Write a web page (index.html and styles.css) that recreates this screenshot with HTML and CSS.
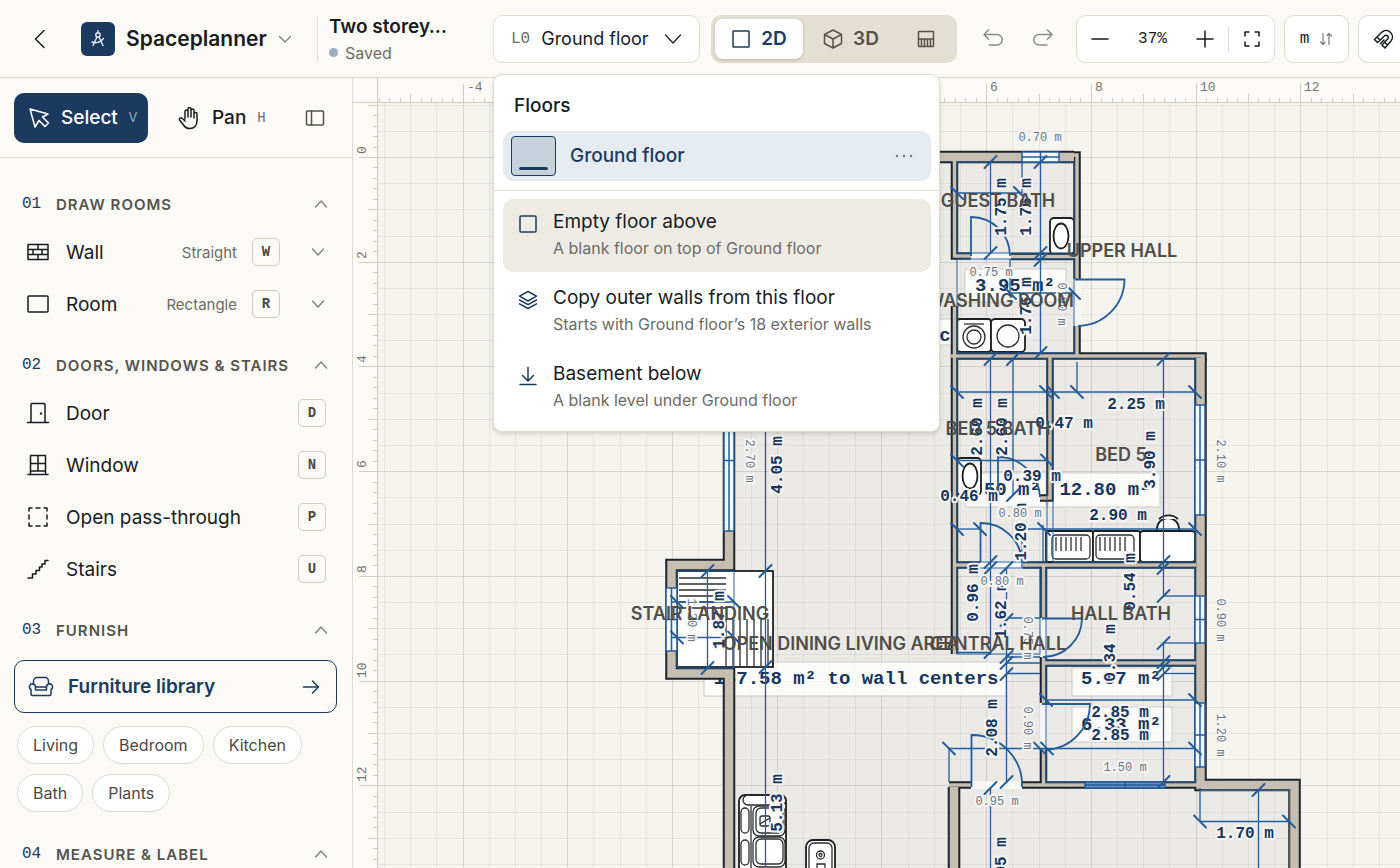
FILE: index.html
```html
<!DOCTYPE html>
<html lang="en">
<head>
<meta charset="utf-8">
<title>Spaceplanner</title>
<link rel="stylesheet" href="styles.css">
</head>
<body>
<header class="topbar">
  <button class="icon-btn back" aria-label="Back"><svg class="ico" width="24" height="24" viewBox="0 0 24 24"><path d="M16 3.500 7.500 12l8.500 8.500"/></svg></button>
  <button class="brand">
    <span class="logo"><svg width="22" height="22" viewBox="0 0 22 22"><circle cx="11" cy="7" r="2.200"/><path d="M11 2.500v2.300M10 9 6 17.500M12 9l4 8.500M5 14c3.500 1.500 8.500.5 11.500-3.500"/></svg></span>
    <span class="brand-name">Spaceplanner</span>
    <svg class="ico thin muted" width="14" height="14" viewBox="0 0 14 14"><path d="m1.500 4.500 5.500 5.500 5.500-5.500"/></svg>
  </button>
  <div class="doc">
    <div class="doc-name">Two storey…</div>
    <div class="doc-state"><i class="dot"></i>Saved</div>
  </div>
  <div class="floor-picker">
    <button class="floor-btn" aria-expanded="true"><span class="level">L0</span><span>Ground floor</span><svg class="ico thin" width="18" height="18" viewBox="0 0 18 18"><path d="m1.500 5 7.500 8 7.500-8"/></svg></button>
    <div class="menu" role="menu">
      <h2 class="menu-title">Floors</h2>
      <div class="current">
        <button class="current-btn"><span class="thumb"></span>Ground floor</button>
        <button class="more" aria-label="More"><svg width="18" height="4" viewBox="0 0 18 4"><circle cx="2" cy="2" r="1.200"/><circle cx="9" cy="2" r="1.200"/><circle cx="16" cy="2" r="1.200"/></svg></button>
      </div>
      <div class="menu-list">
        <button class="item hover" role="menuitem">
          <svg class="ico" width="20" height="20" viewBox="0 0 20 20"><rect x="2" y="2" width="16" height="16" rx="1"/></svg>
          <span class="item-text"><span class="item-name">Empty floor above</span><span class="item-note">A blank floor on top of Ground floor</span></span>
        </button>
        <button class="item" role="menuitem">
          <svg class="ico" width="20" height="20" viewBox="0 0 20 20"><path d="m10 1.500 8.500 4.700L10 11 1.500 6.200zM1.500 10l8.500 4.700 8.500-4.700M1.500 13.800l8.500 4.700 8.500-4.700"/></svg>
          <span class="item-text"><span class="item-name">Copy outer walls from this floor</span><span class="item-note">Starts with Ground floor’s 18 exterior walls</span></span>
        </button>
        <button class="item" role="menuitem">
          <svg class="ico" width="20" height="20" viewBox="0 0 20 20"><path d="M10 1.500V15M4.500 9.500 10 15l5.500-5.500M2 18.500h16"/></svg>
          <span class="item-text"><span class="item-name">Basement below</span><span class="item-note">A blank level under Ground floor</span></span>
        </button>
      </div>
    </div>
  </div>
  <div class="views">
    <button class="view on"><svg class="ico" width="20" height="20" viewBox="0 0 20 20"><rect x="2" y="2" width="16" height="16" rx="0.500"/></svg>2D</button>
    <button class="view"><svg class="ico" width="20" height="20" viewBox="0 0 20 20"><path d="m10 1 8.500 4.500v9L10 19l-8.500-4.500v-9zM1.500 5.500 10 10l8.500-4.500M10 10v9"/></svg>3D</button>
    <button class="view" aria-label="Elevation"><svg class="ico" width="18" height="18" viewBox="0 0 18 18"><rect x="1.500" y="1.500" width="15" height="15" rx="0.500"/><path d="M1.500 9h15M4.500 10v6M7.500 10v6M10.500 10v6M13.500 10v6"/></svg></button>
  </div>
  <div class="history">
    <button class="icon-btn" aria-label="Undo"><svg class="ico" width="22" height="22" viewBox="0 0 22 22"><path d="M6.500 2 2 6.500 6.500 11M2 6.500h13a5 5 0 0 1 0 10.500H7"/></svg></button>
    <button class="icon-btn" aria-label="Redo"><svg class="ico" width="22" height="22" viewBox="0 0 22 22"><path d="M15.500 2 20 6.500 15.500 11M20 6.500H7A5 5 0 0 0 7 17h8"/></svg></button>
  </div>
  <div class="zoom box">
    <button class="zoom-btn" aria-label="Zoom out"><svg class="ico" width="18" height="18" viewBox="0 0 18 18"><path d="M1 9h16"/></svg></button>
    <button class="zoom-val">37%</button>
    <button class="zoom-btn" aria-label="Zoom in"><svg class="ico" width="18" height="18" viewBox="0 0 18 18"><path d="M1 9h16M9 1v16"/></svg></button>
    <button class="zoom-btn fit" aria-label="Fit"><svg class="ico" width="18" height="18" viewBox="0 0 18 18"><path d="M2 6V2h4M12 2h4v4M16 12v4h-4M6 16H2v-4"/></svg></button>
  </div>
  <button class="unit box">m<svg class="ico thin muted" width="14" height="14" viewBox="0 0 14 14"><path d="M4 1.500v11M1.500 10 4 12.500 6 10.500M10 12.500v-11M8 3.500l2-2L12.500 4"/></svg></button>
  <button class="snap box" aria-label="Snap"><svg class="ico" width="22" height="22" viewBox="0 0 22 22"><path d="M1.500 11.500 9 4a6.400 6.400 0 0 1 9 9l-6 7-3-3 6-6.500a2.200 2.200 0 0 0-3-3L4.500 14.500zM4 9l3 3M11.500 14l3 3M7.500 15.500 11 12"/></svg></button>
</header>
<div class="workspace">
  <aside class="side">
    <div class="modes">
      <button class="mode on"><svg class="ico" width="22" height="22" viewBox="0 0 22 22"><path d="m2 2 5 18 4-6.500 6 6 3.500-3.500-6-6L20 7z"/></svg>Select<kbd>V</kbd></button>
      <button class="mode"><svg class="ico" width="24" height="24" viewBox="0 0 24 24"><path d="M8 13V5.500a1.500 1.500 0 0 1 3 0V11V3a1.500 1.500 0 0 1 3 0v8V4.500a1.500 1.500 0 0 1 3 0V12V8a1.500 1.500 0 0 1 3 0v7c0 4.500-3 7.500-7 7.500-3 0-5-1-6.500-3.500L2.500 14c-.8-1.500 1.200-3 2.500-1.700L8 15"/></svg>Pan<kbd>H</kbd></button>
      <button class="icon-btn collapse" aria-label="Collapse panel"><svg class="ico" width="20" height="20" viewBox="0 0 20 20"><rect x="1.500" y="3" width="17" height="14" rx="1"/><path d="M6.500 3v14"/></svg></button>
    </div>
    <div class="groups">
      <section class="group">
        <button class="group-head"><span class="num">01</span><span class="group-name">Draw rooms</span><svg class="ico thin muted" width="14" height="14" viewBox="0 0 14 14"><path d="M1.500 10 7 4l5.500 6"/></svg></button>
        <div class="tool"><button class="tool-btn"><svg class="ico" width="24" height="24" viewBox="0 0 24 24"><path d="M2 4.500h20v15H2zM2 9.500h20M2 14.500h20M12 4.500v5M7 9.500v5M16 9.500v5M12 14.500v5"/></svg>Wall</button><span class="variant">Straight</span><kbd class="key">W</kbd><button class="drop" aria-label="Wall types"><svg class="ico thin muted" width="14" height="14" viewBox="0 0 14 14"><path d="m1.500 4 5.500 6 5.500-6"/></svg></button></div>
        <div class="tool"><button class="tool-btn"><svg class="ico" width="24" height="24" viewBox="0 0 24 24"><rect x="2" y="4" width="20" height="16" rx="1"/></svg>Room</button><span class="variant">Rectangle</span><kbd class="key">R</kbd><button class="drop" aria-label="Room types"><svg class="ico thin muted" width="14" height="14" viewBox="0 0 14 14"><path d="m1.500 4 5.500 6 5.500-6"/></svg></button></div>
      </section>
      <section class="group">
        <button class="group-head"><span class="num">02</span><span class="group-name">Doors, windows &amp; stairs</span><svg class="ico thin muted" width="14" height="14" viewBox="0 0 14 14"><path d="M1.500 10 7 4l5.500 6"/></svg></button>
        <div class="tool"><button class="tool-btn"><svg class="ico" width="24" height="24" viewBox="0 0 24 24"><path d="M5 21.500v-18a1 1 0 0 1 1-1h12a1 1 0 0 1 1 1v18M1.500 21.500h21"/><circle cx="15" cy="12.500" r="0.500"/></svg>Door</button><kbd class="key">D</kbd></div>
        <div class="tool"><button class="tool-btn"><svg class="ico" width="24" height="24" viewBox="0 0 24 24"><path d="M4.500 21V2.500h15V21M2 21.500h20M12 2.500v15.500M4.500 10.500h15M4.500 18h15"/></svg>Window</button><kbd class="key">N</kbd></div>
        <div class="tool"><button class="tool-btn"><svg class="ico" width="24" height="24" viewBox="0 0 24 24"><path d="M3 6V3h3M18 3h3v3M21 18v3h-3M6 21H3v-3M10 3h4M10 21h4M3 10v4M21 10v4"/></svg>Open pass-through</button><kbd class="key">P</kbd></div>
        <div class="tool"><button class="tool-btn"><svg class="ico" width="24" height="24" viewBox="0 0 24 24"><path d="M2 21h4.500v-4H10v-3.500h3.500V10H16V7h3V3.500h3"/></svg>Stairs</button><kbd class="key">U</kbd></div>
      </section>
      <section class="group">
        <button class="group-head"><span class="num">03</span><span class="group-name">Furnish</span><svg class="ico thin muted" width="14" height="14" viewBox="0 0 14 14"><path d="M1.500 10 7 4l5.500 6"/></svg></button>
        <button class="library"><svg class="ico" width="26" height="26" viewBox="0 0 26 26"><path d="M5.500 9.500V7A3.500 3.500 0 0 1 9 3.500h8A3.500 3.500 0 0 1 20.500 7v2.500M7.500 16v-3a3 3 0 1 0-4.500 2.500V20a1.500 1.500 0 0 0 1.500 1.500h17A1.500 1.500 0 0 0 23 20v-4.500a3 3 0 1 0-4.500-2.500v3zM7.500 13h11"/></svg><span class="library-name">Furniture library</span><svg class="ico" width="18" height="18" viewBox="0 0 18 18"><path d="M1.500 9h15M10.500 3l6 6-6 6"/></svg></button>
        <div class="chips"><button class="chip">Living</button><button class="chip">Bedroom</button><button class="chip">Kitchen</button><button class="chip">Bath</button><button class="chip">Plants</button></div>
      </section>
      <section class="group last">
        <button class="group-head"><span class="num">04</span><span class="group-name">Measure &amp; label</span><svg class="ico thin muted" width="14" height="14" viewBox="0 0 14 14"><path d="M1.500 10 7 4l5.500 6"/></svg></button>
      </section>
    </div>
  </aside>
  <main class="canvas">
    <svg class="plan" id="plan" aria-label="Ground floor plan"></svg>
  </main>
</div>
<script src="plan.js"></script>
</body>
</html>
```

FILE: styles.css
```css
:root {
  --navy: #1c3a5e;
  --ink: #191c1f;
  --grey: #6d6c68;
  --line: #dfdcd2;
  --paper: #fbfaf7;
  --sans: Inter, "Liberation Sans", sans-serif;
  --mono: "Liberation Mono", monospace;
}
* { box-sizing: border-box; }
body {
  margin: 0;
  height: 100vh;
  display: flex;
  flex-direction: column;
  overflow: hidden;
  background: var(--paper);
  color: var(--ink);
  font-family: var(--sans);
  font-size: 19px;
}
button {
  font: inherit;
  color: inherit;
  background: none;
  border: 0;
  padding: 0;
  margin: 0;
  display: flex;
  align-items: center;
  flex: none;
  white-space: nowrap;
  text-align: left;
}
svg { flex: none; }
.ico { fill: none; stroke: currentColor; stroke-width: 1.5; stroke-linecap: round; stroke-linejoin: round; }
.thin { stroke-width: 1.2; }
.muted { color: #7d7b76; }
.icon-btn { width: 40px; height: 40px; justify-content: center; }

.topbar {
  position: relative;
  z-index: 2;
  display: flex;
  align-items: center;
  height: 78px;
  flex: none;
  padding-left: 20px;
  border-bottom: 1px solid #d9d7d0;
}
.brand { width: 236px; margin-left: 21px; gap: 11px; }
.logo {
  width: 34px;
  height: 34px;
  border-radius: 6px;
  background: var(--navy);
  display: flex;
  align-items: center;
  justify-content: center;
}
.logo svg { fill: none; stroke: #e3ebf5; stroke-width: 1.4; stroke-linecap: round; }
.brand-name { font-size: 21px; font-weight: 600; }
.doc {
  flex: none;
  width: 176px;
  padding-left: 11px;
  border-left: 1px solid var(--line);
}
.doc-name { font-size: 19px; font-weight: 600; line-height: 22px; }
.doc-state { display: flex; align-items: center; gap: 7px; margin-top: 6px; font-size: 16px; line-height: 18px; color: var(--grey); }
.dot { width: 9px; height: 9px; border-radius: 50%; background: #9dabc4; }
.box, .floor-btn { background: #fff; border: 1px solid var(--line); border-radius: 10px; height: 48px; }
.floor-picker { position: relative; flex: none; }
.floor-btn { width: 207px; padding: 0 17px; gap: 11px; font-size: 18px; }
.floor-btn svg { margin-left: auto; }
.level { font-family: var(--mono); font-size: 16px; color: var(--grey); }
.views {
  display: flex;
  flex: none;
  margin-left: 11px;
  padding: 4px;
  height: 48px;
  width: 246px;
  border-radius: 10px;
  background: #e3dfd3;
}
.view { justify-content: center; gap: 10px; flex: 1; color: #55524b; font-weight: 600; border-radius: 8px; }
.view:last-child { flex: 0 0 54px; }
.view.on { flex: 0 0 88px; background: #fff; color: var(--navy); box-shadow: 0 1px 3px rgba(60, 55, 40, .25); }
.history { display: flex; flex: none; gap: 10px; margin-left: 16px; color: #8b8a86; }
.zoom { display: flex; align-items: center; flex: none; width: 199px; margin-left: 13px; }
.zoom-btn { width: 46px; height: 26px; justify-content: center; }
.zoom-val { flex: 1; justify-content: center; font-size: 16px; font-family: var(--mono); }
.fit { border-left: 1px solid var(--line); }
.unit { width: 65px; margin-left: 9px; gap: 10px; justify-content: center; font-family: var(--mono); font-size: 16px; }
.snap { width: 65px; margin-left: 9px; padding-left: 14px; }

.menu {
  position: absolute;
  top: 59px;
  left: 0;
  width: 447px;
  padding-bottom: 7px;
  background: #fff;
  border: 1px solid var(--line);
  border-radius: 9px;
  box-shadow: 0 2px 4px rgba(40, 40, 30, .16);
}
.menu-title { margin: 0; padding: 19px 20px 13px; font-size: 19px; font-weight: 500; line-height: 24px; }
.current {
  display: flex;
  align-items: center;
  height: 50px;
  margin: 0 8px 9px 9px;
  padding: 0 18px 0 8px;
  border-radius: 10px;
  background: #e6eaf1;
  color: var(--navy);
}
.current-btn { flex: 1; gap: 14px; font-weight: 500; }
.thumb { width: 45px; height: 40px; padding: 30px 7px 0; border: 1px solid var(--navy); border-radius: 4px; background: #c6d1dc; }
.thumb::after { content: ""; display: block; height: 3px; border-radius: 2px; background: var(--navy); }
.more svg { fill: #6f7680; }
.menu-list { padding: 8px 8px 0 9px; border-top: 1px solid var(--line); display: flex; flex-direction: column; gap: 3px; }
.item { width: 100%; height: 73px; padding: 9px 15px; gap: 15px; border-radius: 10px; align-items: flex-start; }
.item .ico { margin-top: 6px; color: var(--navy); }
.item.hover { background: #eeebe4; }
.item-text { display: flex; flex-direction: column; gap: 1px; }
.item-name { line-height: 27px; }
.item-note { font-size: 16px; line-height: 24px; color: var(--grey); }

.workspace { flex: 1; min-height: 0; display: flex; }
.side { width: 353px; flex: none; border-right: 1px solid #dcdad2; overflow: hidden; }
.modes { display: flex; align-items: center; height: 80px; padding: 0 17px 0 14px; border-bottom: 1px solid #dcdad2; }
.mode { height: 50px; padding: 0 14px; gap: 11px; border-radius: 10px; font-weight: 500; }
.mode.on { width: 134px; margin-right: 15px; background: var(--navy); color: #fff; }
kbd { font-family: var(--mono); font-size: 14px; color: var(--grey); }
.mode.on kbd { color: #93a5ba; }
.collapse { margin-left: auto; color: #55524b; }
.groups { padding: 24px 15px 0 14px; }
.group { margin-bottom: 13px; }
.group-head { width: 100%; height: 44px; padding: 0 9px 0 8px; }
.num { width: 34px; font-family: var(--mono); font-size: 16px; color: var(--navy); }
.group-name { flex: 1; font-size: 15px; font-weight: 600; letter-spacing: 1px; text-transform: uppercase; color: #55534e; }
.tool { display: flex; align-items: center; height: 52px; padding: 0 11px 0 12px; }
.tool-btn { flex: 1; gap: 16px; }
.variant { font-size: 15px; color: var(--grey); }
.key {
  width: 28px;
  height: 28px;
  margin-left: 15px;
  display: flex;
  align-items: center;
  justify-content: center;
  font-weight: 700;
  color: #4b4945;
  background: var(--paper);
  border: 1px solid #cfccc0;
  border-radius: 5px;
}
.drop { width: 46px; justify-content: flex-end; padding-right: 1px; }
.library { width: 100%; height: 53px; margin: 8px 0 13px; padding: 0 16px 0 13px; gap: 14px; border: 1px solid var(--navy); border-radius: 10px; color: var(--navy); font-weight: 600; }
.library-name { flex: 1; }
.chips { display: flex; flex-wrap: wrap; gap: 10px 9px; padding: 0 3px; margin-bottom: 20px; }
.chip { height: 38px; padding: 0 15px; font-size: 16px; color: #4b4945; background: #fff; border: 1px solid var(--line); border-radius: 19px; }

.canvas { flex: 1; min-width: 0; position: relative; background: #f4f3ed; overflow: hidden; }
.plan { display: block; width: 100%; height: 100%; }
.crisp { shape-rendering: crispEdges; }
.floor { fill: #eae9e5; }
.grid-minor { stroke: #4b5560; stroke-opacity: .08; }
.grid-major { stroke: #4b5560; stroke-opacity: .17; }
.gap { fill: #f6f6f4; }
.wall-edge { fill: none; stroke: #1b232c; stroke-linejoin: miter; }
.wall-core { fill: none; stroke: #c6bfb1; stroke-linejoin: miter; }
.room-line { fill: none; stroke: #2a629f; stroke-width: 1; }
.win { fill: #f2f7fc; stroke: #245c9b; stroke-width: 1.5; }
.win-dark { fill: #5f93c4; }
.leaf { fill: none; stroke: #245c9b; stroke-width: 1.8; }
.dim { stroke: #245c9b; stroke-width: 1.3; }
.slash { stroke: #245c9b; stroke-width: 2; stroke-linecap: round; }
.furn { fill: #fff; stroke: #1d1f21; stroke-width: 1.8; }
.detail { fill: none; stroke: #2b2d2f; stroke-width: 1.3; }
.area-box { fill: #fff; fill-opacity: .8; stroke: #c9cbcc; }
.plan text { text-anchor: middle; dominant-baseline: central; }
.halo { paint-order: stroke; stroke: #f5f5f3; stroke-width: 4; stroke-linejoin: round; }
.t-dim { font: 700 16px var(--mono); fill: #17365e; }
.t-open { font: 400 12px var(--mono); fill: #6b7588; }
.t-area { font: 700 19px var(--mono); fill: #17365e; }
.t-room { font: 600 18px var(--sans); fill: #504e4a; }
.ruler { fill: var(--paper); }
.ruler-line { stroke: #cfccc0; }
.plan .t-rule { font: 400 13px var(--mono); fill: #77756f; text-anchor: start; dominant-baseline: auto; }
```

FILE: plan.js
```js
(function () {
  var NS = 'http://www.w3.org/2000/svg';
  var svg = document.getElementById('plan');
  var OX = 353, OY = 78;       // where the canvas starts in the window
  var ZX = 672, ZY = 157;      // plan origin in the window
  var M = 52.36;               // pixels per metre
  var W = Math.max(svg.clientWidth, 200) + OX;
  var H = Math.max(svg.clientHeight, 200) + OY;
  var root = add('g', { transform: 'translate(' + -OX + ' ' + -OY + ')' }, svg);

  function add(tag, attrs, parent, text) {
    var e = document.createElementNS(NS, tag);
    for (var k in attrs) e.setAttribute(k, attrs[k]);
    if (text) e.textContent = text;
    (parent || root).appendChild(e);
    return e;
  }
  function path(d, cls, extra) {
    var a = { d: d, 'class': cls };
    for (var k in extra || {}) a[k] = extra[k];
    return add('path', a);
  }
  function rect(x1, y1, x2, y2, cls, r) {
    add('rect', { x: x1, y: y1, width: x2 - x1, height: y2 - y1, rx: r || 0, 'class': cls });
  }
  function line(x1, y1, x2, y2, cls) {
    add('line', { x1: x1, y1: y1, x2: x2, y2: y2, 'class': cls });
  }
  function label(s, x, y, cls, rot) {
    var a = { x: x, y: y, 'class': cls };
    if (rot) a.transform = 'rotate(' + rot + ' ' + x + ' ' + y + ')';
    add('text', a, root, s);
  }

  // Floor area
  path('M729 157H1078V356H1200V785H1295V' + H + 'H729V674H672V565H729Z', 'floor');

  // Grid
  var i, p;
  for (i = -14; (p = Math.round(ZX + i * M / 2)) < W; i++) line(p + .5, OY, p + .5, H, 'crisp ' + (i % 4 ? 'grid-minor' : 'grid-major'));
  for (i = -4; (p = Math.round(ZY + i * M / 2)) < H; i++) line(OX, p + .5, W, p + .5, 'crisp ' + (i % 4 ? 'grid-minor' : 'grid-major'));

  // Area plates
  [[704, 662, 1006, 696], [900, 319, 953, 345], [965, 269, 1066, 302], [966, 473, 1046, 507], [1048, 473, 1160, 507],
   [1072, 668, 1172, 696], [1072, 707, 1172, 742]].forEach(function (b) { rect(b[0], b[1], b[2], b[3], 'area-box'); });
  label('167.58 m² to wall centers', 856, 679, 't-area');
  label('3.95 m²', 1015, 286, 't-area');
  label('5.50 m²', 1001, 490, 't-area');
  label('12.80 m²', 1105, 490, 't-area');
  label('5.07 m²', 1121, 679, 't-area');
  label('6.33 m²', 1121, 725, 't-area');
  label('c', 945, 336, 't-area');

  // Furniture
  rect(677, 571, 773, 667, 'furn');
  for (i = 0; i < 6; i++) path('M679 ' + (578 + i * 6) + 'H726', 'detail');
  for (i = 0; i < 7; i++) path('M' + (726 + i * 7) + ' 619V666', 'detail');
  rect(957, 319, 991, 352, 'furn', 3);
  rect(991, 319, 1025, 352, 'furn', 4);
  path('M964 324h20', 'detail');
  [[974, 337, 11], [974, 337, 7], [1008, 336, 11]].forEach(function (c) { add('circle', { cx: c[0], cy: c[1], r: c[2], 'class': 'detail' }); });
  rect(1050, 218, 1074, 254, 'furn', 4);
  add('ellipse', { cx: 1061, cy: 236, rx: 7.5, ry: 12.5, 'class': 'furn' });
  rect(957, 458, 981, 495, 'furn', 4);
  add('ellipse', { cx: 970, cy: 476, rx: 7.5, ry: 12.5, 'class': 'furn' });
  add('circle', { cx: 1168, cy: 529, r: 11, 'class': 'furn' });
  path('M1159 519a14 14 0 0 1 19 0', 'furn');
  rect(1046, 531, 1093, 562, 'furn', 2);
  rect(1093, 531, 1140, 562, 'furn', 2);
  rect(1140, 531, 1195, 562, 'furn', 3);
  [1052, 1096].forEach(function (x) {
    rect(x, 535, x + 38, 559, 'detail', 4);
    for (var k = 0; k < 6; k++) path('M' + (x + 4 + k * 5) + ' 537v14', 'detail');
  });
  rect(739, 795, 786, 890, 'furn', 6);
  rect(743, 795, 786, 805, 'detail', 5);
  rect(741, 808, 749, 833, 'detail', 4);
  rect(741, 840, 749, 865, 'detail', 4);
  path('M751 806V868', 'detail');
  [806, 837].forEach(function (y) { rect(753, y, 785, y + 30, 'detail', 6); rect(756, y + 2, 783, y + 27, 'detail', 5); });
  rect(760, 816, 770, 826, 'detail', 2);
  path('M760 824l10-6', 'detail');
  rect(806, 840, 835, 900, 'furn', 7);
  rect(809, 843, 832, 900, 'detail', 5);
  add('circle', { cx: 820.5, cy: 855, r: 4, 'class': 'detail' });
  add('circle', { cx: 820.5, cy: 855, r: 1.5, 'class': 'detail' });
  path('M817 868v-4h8v4', 'detail');

  // Walls: centre lines, dark outer edge first, then the core
  var thick = 'M729 400V565H671.500V673.500H729V' + (H + 20) + 'M729 157H1074M1200.500 358V785H1294.500V' + (H + 20) + 'M954 ' + (H + 20) + 'V787';
  var thin = 'M1074 155H1077V279M1077 326V356H951M1077 356H1203V362M954.500 157V256H971M1011 256.500H1077M954.500 306V654M1050 356V498H1040' +
    'M954 565H980M1023 565H1196M1043.500 565V618M1043.500 657V703M1043.500 749V785M1043 663H1196M949 785H971M1022 785H1200';
  path(thick, 'wall-edge', { 'stroke-width': 12.5 });
  path(thin, 'wall-edge', { 'stroke-width': 7.5 });
  path(thick, 'wall-core', { 'stroke-width': 8.5 });
  path(thin, 'wall-core', { 'stroke-width': 3.5 });

  // Door openings
  [[971, 253, 1011, 260], [1073, 279, 1081, 326], [980, 561, 1023, 569], [1040, 618, 1047, 657],
   [1040, 703, 1047, 749], [971, 781, 1022, 789]].forEach(function (g) { rect(g[0], g[1], g[2], g[3], 'gap'); });

  // Room outlines
  [[957, 162, 1074, 253], [957, 259, 1074, 353], [957, 359, 1047, 562], [1053, 359, 1195, 562],
   [957, 568, 1040, 654], [1046, 568, 1195, 660], [1046, 666, 1195, 782]].forEach(function (r) { rect(r[0], r[1], r[2], r[3], 'room-line'); });
  path('M1200 790.500H1289.500V' + H + 'M677 571H734V668H677Z', 'room-line');

  // Windows
  function win(x1, y1, x2, y2, dark) {
    rect(x1, y1, x2, y2, dark ? 'win win-dark' : 'win');
    var mx = (x1 + x2) / 2, my = (y1 + y2) / 2;
    path('M' + mx + ' ' + y1 + 'V' + y2 + 'M' + x1 + ' ' + my + 'H' + x2, 'win');
  }
  win(1022, 152, 1059, 162);
  win(1195, 405, 1205, 515);
  win(1195, 596, 1205, 643);
  win(1195, 703, 1205, 767);
  win(666, 588, 677, 651);
  win(724, 390, 734, 531);
  win(1085, 782, 1165, 788, true);

  // Door leaves and swings
  path('M971 256V217A39 39 0 0 1 1010 256', 'leaf');
  path('M1075 279.500H1124.500A47 47 0 0 1 1078 326', 'leaf');
  path('M998 497V457A42 42 0 0 1 1040 497', 'leaf');
  path('M980.500 562V523A41 41 0 0 1 1022 562', 'leaf');
  path('M1042 618.500H1082A39 39 0 0 1 1043 657', 'leaf');
  path('M1042 704H1090A46 46 0 0 1 1045 750', 'leaf');
  path('M971.500 787V735A50 50 0 0 1 1022 787', 'leaf');

  // Dimension lines: [x1, y1, x2, y2, positions of ticks along the line]
  [[990.5, 162, 990.5, 253, [162, 253]], [1040.5, 162, 1040.5, 353, [162, 253, 260, 353]],
   [957, 193, 1022, 193, [957, 1020]], [1022, 162, 1022, 193, []],
   [1010, 293, 1074, 293, [1010, 1074]], [1010, 259, 1010, 293, []],
   [957, 392, 1195, 392, [957, 1046, 1053, 1077, 1195]], [1077, 362, 1077, 392, []],
   [990.5, 359, 990.5, 655, [359, 562, 568, 652]], [1013, 359, 1013, 495, [359, 495]],
   [1163.5, 359, 1163.5, 596, [359, 562, 568, 596]], [957, 460.5, 1047, 460.5, [957, 1047]],
   [957, 529, 980, 529, [957, 980]], [1023, 529, 1195, 529, [1044, 1195]], [1043, 525, 1043, 562, []], [1022, 529, 1022, 568, []],
   [1006.5, 568, 1006.5, 782, [568, 620, 657, 663, 674, 782]], [1163.5, 643, 1163.5, 782, [643, 662, 667, 674, 782]],
   [1163, 596, 1195, 596, []], [1163, 643, 1195, 643, []], [1006, 618, 1040, 618, []], [957, 652.5, 990, 652.5, []],
   [1006, 657, 1040, 657, []], [1006, 663, 1040, 663, []], [1006, 673.5, 1040, 673.5, []], [1163, 673.5, 1195, 673.5, []],
   [1046, 700, 1195, 700, [1046, 1195]], [949, 748.5, 1195, 748.5, [949, 1040, 1047, 1195]], [949, 748, 949, 782, []],
   [990.5, 788, 990.5, H, [788]], [1200, 821.5, 1289, 821.5, [1200, 1289]], [1200, 788, 1200, 821, []],
   [1258.5, 790, 1258.5, H, [790]], [765.5, 420, 765.5, H, [571, 667]], [707.5, 571, 707.5, 668, [571, 668]],
   [672, 602, 734, 602, [677, 734]], [672, 637.5, 734, 637.5, [677, 734]]
  ].forEach(function (d) {
    line(d[0], d[1], d[2], d[3], 'dim');
    d[4].forEach(function (t) {
      if (d[0] === d[2]) line(d[0] - 6, t + 6, d[0] + 6, t - 6, 'slash');
      else line(t - 6, d[1] - 6, t + 6, d[1] + 6, 'slash');
    });
  });

  // Dimension figures
  [['1.75 m', 1002, 207], ['1.76 m', 1027, 207], ['1.76 m', 1027, 306], ['2.60 m', 978, 427], ['2.60 m', 1003, 427],
   ['3.90 m', 1151, 460], ['4.05 m', 778, 465], ['1.20 m', 1022, 532], ['0.96 m', 974, 593], ['1.62 m', 1002, 610],
   ['0.54 m', 1131, 582], ['0.34 m', 1111, 653], ['2.08 m', 993, 728], ['5.13 m', 778, 803], ['3.95 m', 1002, 866], ['1.87 m', 720, 620]
  ].forEach(function (t) { label(t[0], t[1], t[2], 't-dim halo', -90); });
  [['2.25 m', 1136, 405], ['0.47 m', 1064, 424], ['0.39 m', 1032, 477], ['0.46 m', 969, 497], ['2.90 m', 1118, 516],
   ['2.85 m', 1120, 713], ['2.85 m', 1120, 736], ['1.70 m', 1245, 834]
  ].forEach(function (t) { label(t[0], t[1], t[2], 't-dim halo'); });
  [['0.70 m', 1040, 138], ['0.75 m', 991, 273], ['0.80 m', 1020, 514], ['0.80 m', 1002, 582], ['1.50 m', 1125, 768], ['0.95 m', 997, 802]
  ].forEach(function (t) { label(t[0], t[1], t[2], 't-open halo'); });
  [['0.90 m', 1061, 304], ['2.10 m', 1220, 461], ['2.70 m', 749, 461], ['0.75 m', 1027, 638], ['0.90 m', 1220, 620],
   ['0.90 m', 1027, 728], ['1.20 m', 1220, 735], ['1.20 m', 691, 620]
  ].forEach(function (t) { label(t[0], t[1], t[2], 't-open halo', 90); });

  // Room names
  [['GUEST BATH', 998, 200], ['UPPER HALL', 1122, 250], ['WASHING ROOM', 1000, 300], ['BED 5 BATH', 998, 428], ['BED 5', 1121, 454],
   ['HALL BATH', 1121, 613], ['CENTRAL HALL', 998, 643], ['OPEN DINING LIVING AREA', 841, 643], ['STAIR LANDING', 700, 613]
  ].forEach(function (t) { label(t[0], t[1], t[2], 't-room'); });

  // Rulers
  rect(OX, OY, W, 103, 'ruler');
  rect(OX, OY, 378, H, 'ruler');
  line(OX, 102.5, W, 102.5, 'ruler-line');
  line(377.5, OY, 377.5, H, 'ruler-line');
  for (i = -28; (p = Math.round(ZX + i * M / 5)) < W; i++) {
    if (p < 379) continue;
    line(p + .5, i % 5 ? 98 : i % 10 ? 94 : 84, p + .5, 102, 'ruler-line');
    if (i % 10 === 0) label(String(i / 5), p + 4, 91, 't-rule');
  }
  for (i = -5; (p = Math.round(ZY + i * M / 5)) < H; i++) {
    line(i % 5 ? 373 : i % 10 ? 368 : 359, p + .5, 377, p + .5, 'ruler-line');
    if (i % 10 === 0) label(String(i / 5), 366, p - 3, 't-rule', -90);
  }
})();
```
